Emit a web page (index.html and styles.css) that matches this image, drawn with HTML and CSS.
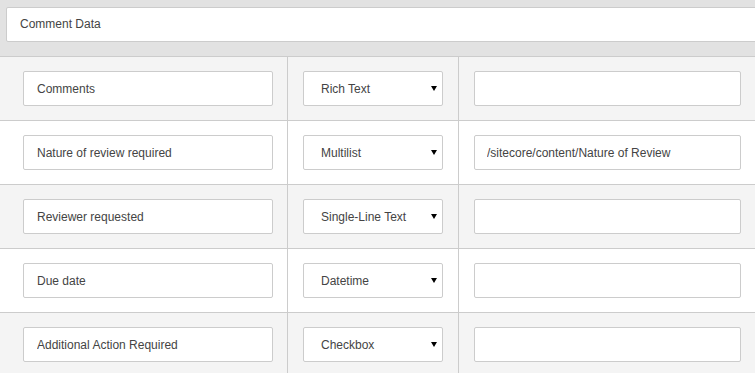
FILE: index.html
```html
<!DOCTYPE html>
<html lang="en">
<head>
    <meta charset="UTF-8">
    <title>Comment Data</title>
    <link rel="stylesheet" href="styles.css">
</head>
<body>
<div class="section-head">
    <div class="section-title">Comment Data</div>
</div>

<div class="fields">
    <div class="field-row alt">
        <div class="cell cell-name"><input class="box" type="text" value="Comments"></div>
        <div class="cell cell-type">
            <div class="select-wrap">
                <select class="box">
                    <option>Rich Text</option>
                </select>
            </div>
        </div>
        <div class="cell cell-source"><input class="box" type="text" value=""></div>
    </div>

    <div class="field-row">
        <div class="cell cell-name"><input class="box" type="text" value="Nature of review required"></div>
        <div class="cell cell-type">
            <div class="select-wrap">
                <select class="box">
                    <option>Multilist</option>
                </select>
            </div>
        </div>
        <div class="cell cell-source"><input class="box" type="text" value="/sitecore/content/Nature of Review"></div>
    </div>

    <div class="field-row alt">
        <div class="cell cell-name"><input class="box" type="text" value="Reviewer requested"></div>
        <div class="cell cell-type">
            <div class="select-wrap">
                <select class="box">
                    <option>Single-Line Text</option>
                </select>
            </div>
        </div>
        <div class="cell cell-source"><input class="box" type="text" value=""></div>
    </div>

    <div class="field-row">
        <div class="cell cell-name"><input class="box" type="text" value="Due date"></div>
        <div class="cell cell-type">
            <div class="select-wrap">
                <select class="box">
                    <option>Datetime</option>
                </select>
            </div>
        </div>
        <div class="cell cell-source"><input class="box" type="text" value=""></div>
    </div>

    <div class="field-row alt">
        <div class="cell cell-name"><input class="box" type="text" value="Additional Action Required"></div>
        <div class="cell cell-type">
            <div class="select-wrap">
                <select class="box">
                    <option>Checkbox</option>
                </select>
            </div>
        </div>
        <div class="cell cell-source"><input class="box" type="text" value=""></div>
    </div>
</div>
</body>
</html>
```

FILE: styles.css
```css
html, body {
    margin: 0;
    padding: 0;
}

body {
    background: #e2e2e2;
    font-family: "Liberation Sans", Arial, sans-serif;
    font-size: 12px;
    color: #444;
    overflow: hidden;
}

.section-head {
    padding: 7px 0 14px 6px;
}

.section-title {
    height: 33px;
    line-height: 32px;
    margin-right: -4px;
    padding-left: 13px;
    background: #fff;
    border: 1px solid #ccc;
    border-radius: 2px 0 0 2px;
}

.fields {
    border-top: 1px solid #ccc;
}

.field-row {
    display: grid;
    grid-template-columns: 288px 171px 1fr;
    background: #fff;
    border-bottom: 1px solid #ccc;
}

.field-row.alt {
    background: #f4f4f4;
}

.cell {
    padding: 14px 15px;
    border-right: 1px solid #ccc;
}

.cell:last-child {
    border-right: none;
}

.cell-name {
    padding-left: 23px;
    padding-right: 0;
}

.cell-name .box {
    width: 250px;
}

.cell-type .box {
    width: 140px;
    padding-left: 17px;
}

.cell-source .box {
    width: 267px;
    padding-left: 12px;
}

.box {
    display: block;
    box-sizing: border-box;
    height: 35px;
    margin: 0;
    padding: 0 10px 0 13px;
    background: #fff;
    border: 1px solid #ccc;
    border-radius: 2px;
    font-family: "Liberation Sans", Arial, sans-serif;
    font-size: 12px;
    color: #444;
    outline: none;
}

select.box {
    -webkit-appearance: none;
    appearance: none;
}

.select-wrap {
    position: relative;
    width: 140px;
}

.select-wrap::after {
    content: "";
    position: absolute;
    top: 15px;
    right: 6px;
    border-left: 3px solid transparent;
    border-right: 3px solid transparent;
    border-top: 5px solid #000;
    pointer-events: none;
}
```
